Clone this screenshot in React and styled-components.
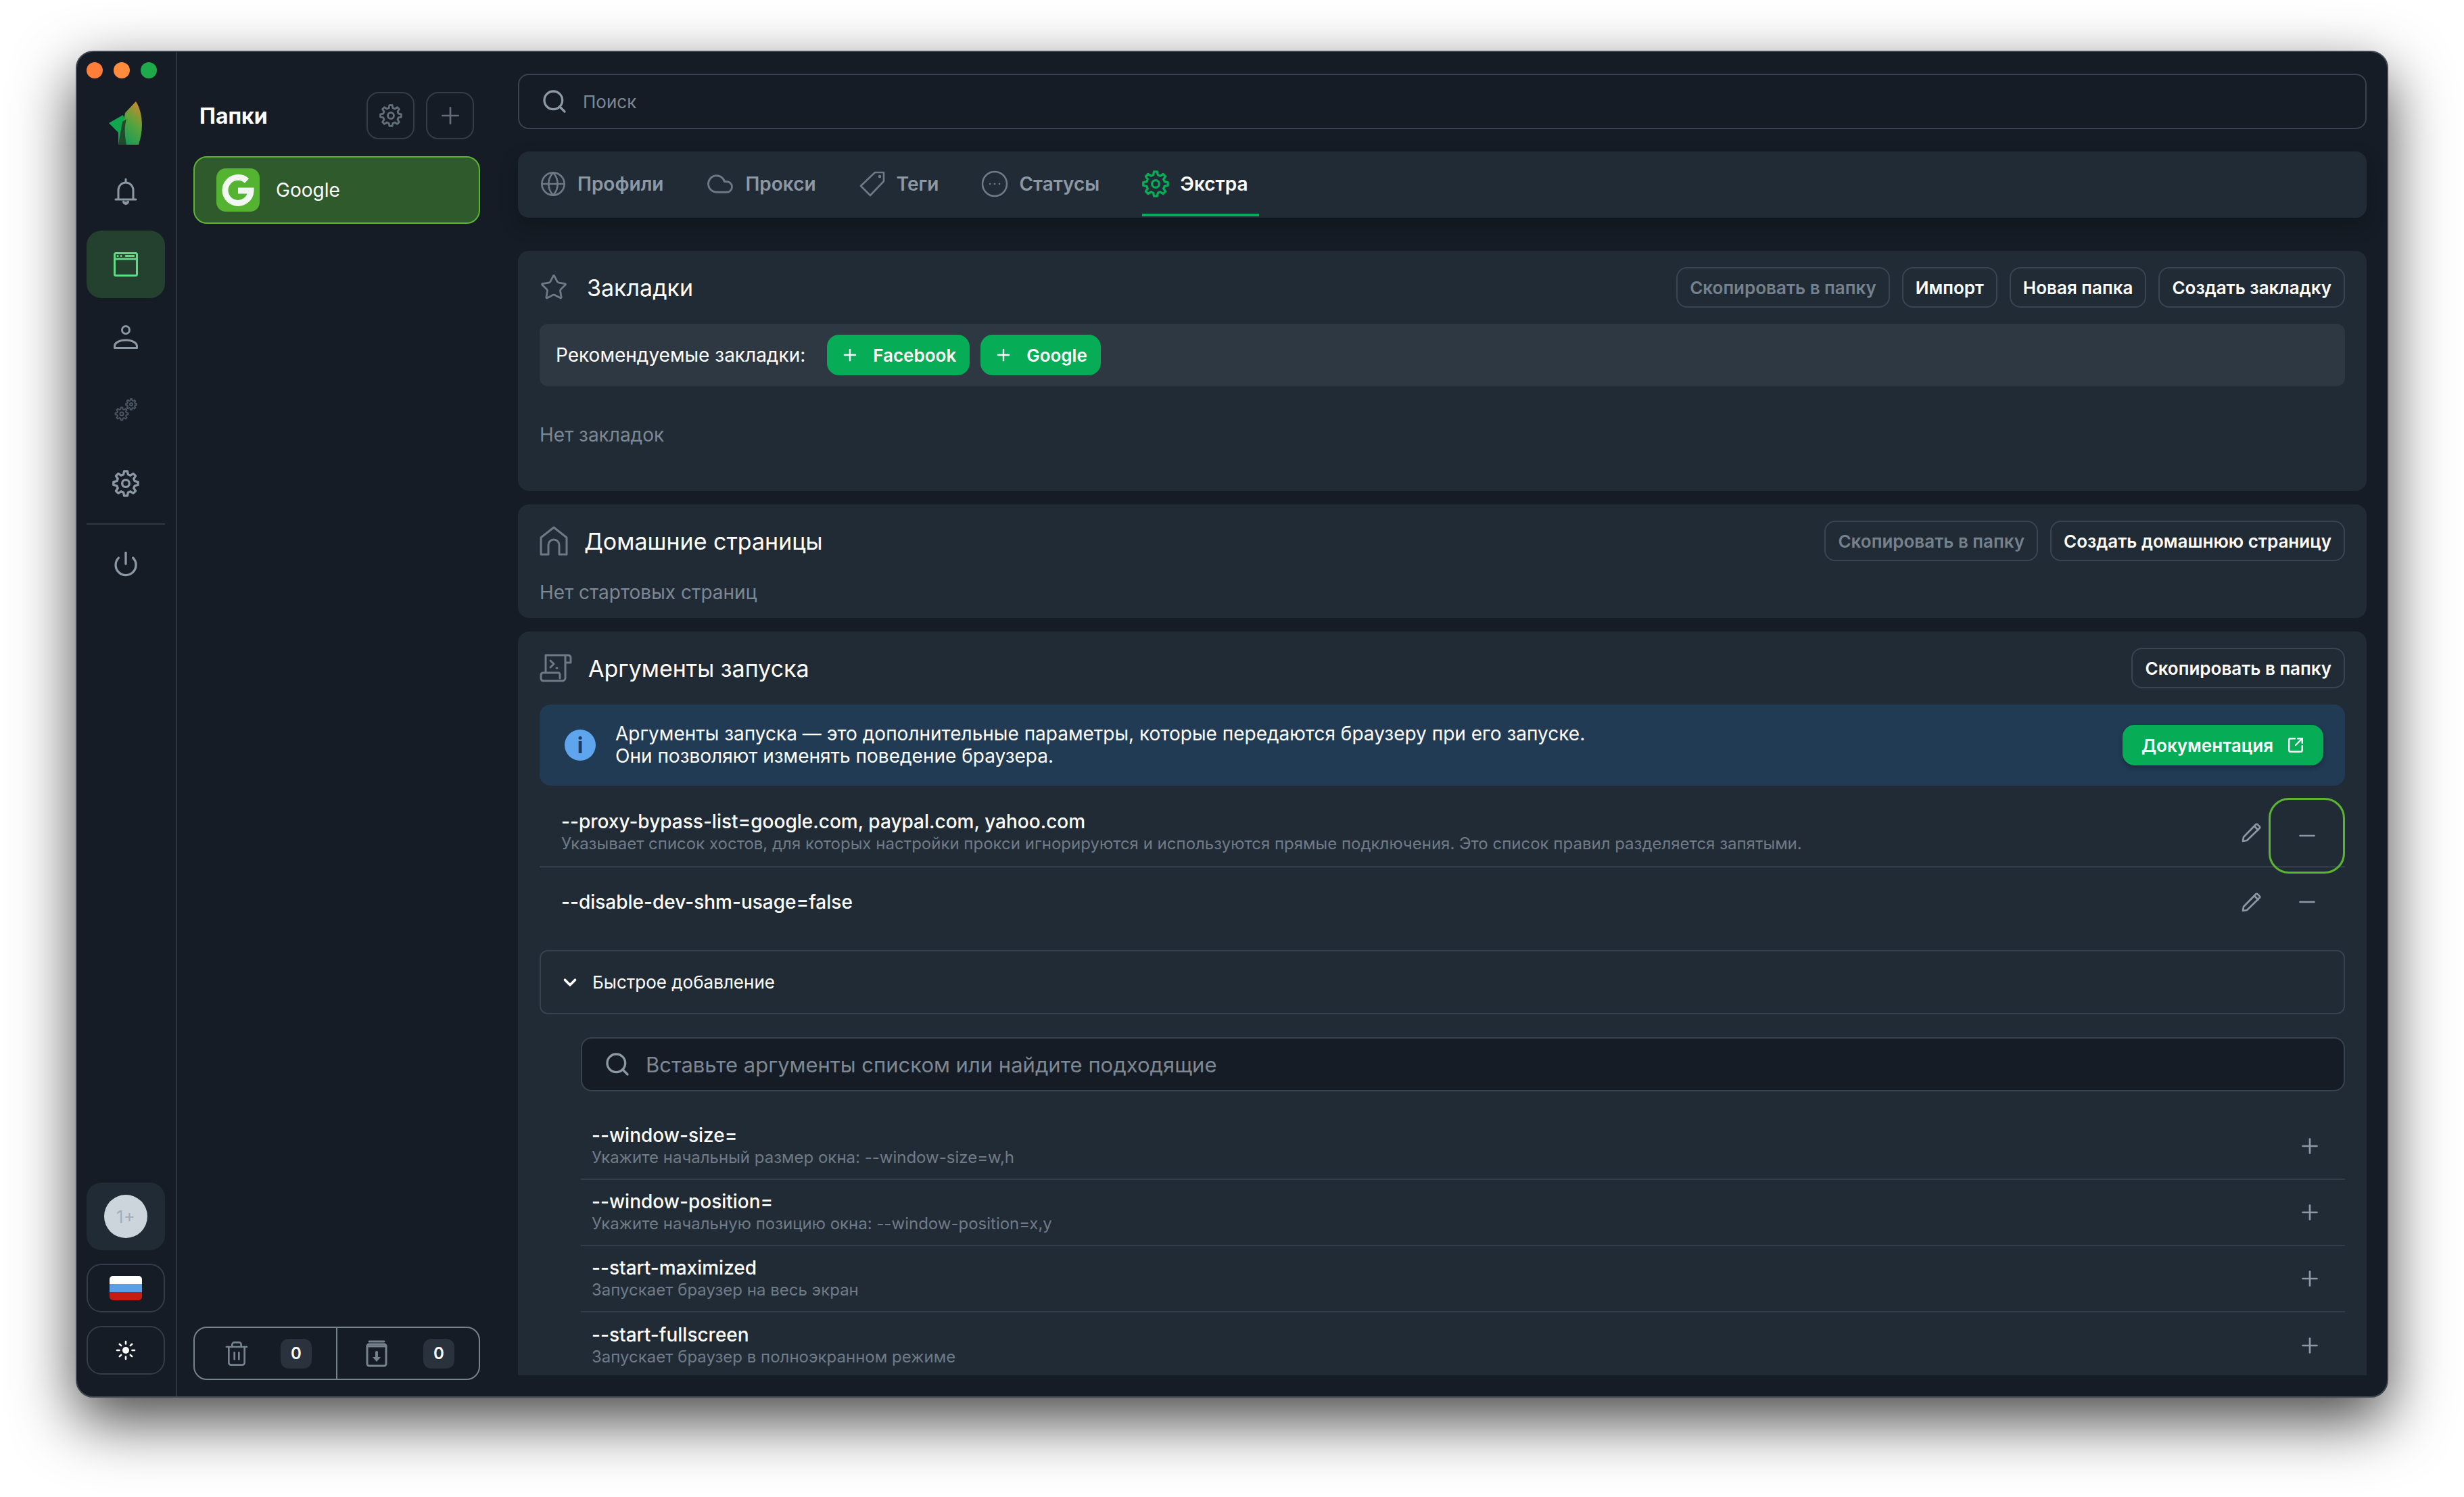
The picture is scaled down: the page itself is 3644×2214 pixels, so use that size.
import React from "react";
import styled, { createGlobalStyle } from "styled-components";
import { Search, Plus, Minus, Globe, Cloud, Power, ChevronDown, Trash2, SquareArrowOutUpRight, Star } from "lucide-react";

const FONT = "Inter, 'Noto Sans', 'Liberation Sans', sans-serif";

const GlobalStyle = createGlobalStyle`
  html, body { margin: 0; padding: 0; background: #fff; }
  * { box-sizing: border-box; }
  body { font-family: ${FONT}; }
`;

// --- SHELL ---
const Page = styled.div`
  width: 3644px;
  height: 2214px;
  padding: 75px 112px 147px;
  background: #fff;
  overflow: hidden;
`;

const Window = styled.div`
  width: 3420px;
  height: 1992px;
  display: flex;
  background: #151c25;
  border: 2px solid #3d454f;
  border-radius: 26px;
  box-shadow: 0 34px 90px rgba(0, 0, 0, 0.72);
  overflow: hidden;
`;

// --- RAIL ---
const Rail = styled.aside`
  width: 148px;
  flex-shrink: 0;
  display: flex;
  flex-direction: column;
  padding: 15px 16px 32px 14px;
  border-right: 2px solid #2c3540;
`;

const Lights = styled.div`
  display: flex;
  gap: 16px;
  height: 24px;
`;

const Light = styled.span`
  width: 24px;
  height: 24px;
  border-radius: 50%;
  background: ${(p) => p.$color};
`;

const LogoBox = styled.div`
  display: flex;
  justify-content: center;
  margin: 34px 0 19px;
  height: 64px;
`;

const RailItem = styled.div`
  height: 100px;
  margin-bottom: 8px;
  display: flex;
  align-items: center;
  justify-content: center;
  border-radius: 22px;
  background: ${(p) => (p.$active ? "#24402f" : "transparent")};
`;

const RailDivider = styled.div`
  height: 2px;
  margin: 1px 0 8px;
  background: #2f3842;
`;

const RailBottom = styled.div`
  margin-top: auto;
  display: flex;
  flex-direction: column;
  gap: 20px;
`;

const AvatarCell = styled.div`
  height: 100px;
  display: flex;
  align-items: center;
  justify-content: center;
  border-radius: 22px;
  background: #212b36;
`;

const Avatar = styled.div`
  width: 64px;
  height: 64px;
  border-radius: 50%;
  display: flex;
  align-items: center;
  justify-content: center;
  background: #cbd5db;
  color: #a3afb8;
  font-size: 26px;
`;

const RailButton = styled.div`
  height: 72px;
  display: flex;
  align-items: center;
  justify-content: center;
  border: 2px solid #333d49;
  border-radius: 22px;
`;

const Flag = styled.div`
  width: 48px;
  height: 36px;
  border-radius: 5px;
  overflow: hidden;
  display: flex;
  flex-direction: column;
`;

const FlagStripe = styled.span`
  flex: 1;
  background: ${(p) => p.$color};
`;

// --- FOLDERS ---
const Folders = styled.aside`
  width: 504px;
  flex-shrink: 0;
  display: flex;
  flex-direction: column;
  padding: 59px 56px 24px 24px;
`;

const FoldersHead = styled.div`
  display: flex;
  align-items: center;
  justify-content: space-between;
  height: 70px;
  padding: 0 9px;
`;

const FoldersTitle = styled.h2`
  margin: 0;
  color: #fff;
  font-size: 32px;
  font-weight: 700;
`;

const HeadButtons = styled.div`
  display: flex;
  gap: 17px;
`;

const SquareButton = styled.div`
  width: 71px;
  height: 70px;
  display: flex;
  align-items: center;
  justify-content: center;
  border: 2px solid #333d49;
  border-radius: 18px;
`;

const FolderItem = styled.div`
  margin-top: 25px;
  height: 100px;
  display: flex;
  align-items: center;
  gap: 24px;
  padding-left: 32px;
  background: #2f5a2c;
  border: 2px solid #5cb531;
  border-radius: 20px;
  color: #fff;
  font-size: 28px;
`;

const FolderIcon = styled.div`
  width: 64px;
  height: 64px;
  border-radius: 14px;
  background: #55b332;
  display: flex;
  align-items: center;
  justify-content: center;
`;

const FoldersFoot = styled.div`
  margin-top: auto;
  height: 79px;
  display: flex;
  border: 2px solid #76838f;
  border-radius: 20px;
`;

const FootCell = styled.div`
  flex: 1;
  display: flex;
  align-items: center;
  justify-content: space-between;
  padding: 0 36px 0 42px;
  & + & { border-left: 2px solid #76838f; }
`;

const CountBadge = styled.span`
  width: 46px;
  height: 44px;
  border-radius: 12px;
  background: #29323d;
  color: #fff;
  font-size: 24px;
  font-weight: 600;
  display: flex;
  align-items: center;
  justify-content: center;
`;

// --- MAIN ---
const Main = styled.main`
  flex: 1;
  min-width: 0;
  display: flex;
  flex-direction: column;
  padding: 32px 30px 31px 0;
`;

const SearchBox = styled.div`
  height: ${(p) => p.$height}px;
  flex-shrink: 0;
  display: flex;
  align-items: center;
  gap: ${(p) => p.$gap}px;
  padding-left: 32px;
  margin-left: ${(p) => p.$indent || 0}px;
  margin-top: ${(p) => p.$top || 0}px;
  background: #151c25;
  border: 2px solid #39434f;
  border-radius: 16px;
  color: #7c8894;
  font-size: ${(p) => p.$font}px;
`;

const Tabs = styled.nav`
  margin-top: 33px;
  height: 98px;
  flex-shrink: 0;
  display: flex;
  gap: 46px;
  padding: 0 32px 2px;
  background: #212b36;
  border-radius: 16px;
  box-shadow: 0 12px 24px rgba(10, 14, 20, 0.35);
`;

const Tab = styled.div`
  display: flex;
  align-items: center;
  gap: 16px;
  padding-right: 17px;
  padding-top: 4px;
  border-bottom: 4px solid ${(p) => (p.$active ? "#06ac56" : "transparent")};
  color: ${(p) => (p.$active ? "#fff" : "#8c98a4")};
  font-size: 28px;
  font-weight: 600;
`;

const Scroll = styled.div`
  flex: 1;
  min-height: 0;
  margin-top: 49px;
  display: flex;
  flex-direction: column;
  gap: 20px;
  overflow: hidden;
`;

const Section = styled.section`
  flex-shrink: 0;
  padding: 24px 32px 22px;
  background: #212b36;
  border-radius: 16px;
`;

const SectionHead = styled.header`
  min-height: 60px;
  display: flex;
  align-items: center;
  gap: ${(p) => p.$gap || 28}px;
`;

const SectionTitle = styled.h3`
  margin: 0;
  color: #fff;
  font-size: 34px;
  font-weight: 400;
`;

const HeadActions = styled.div`
  margin-left: auto;
  display: flex;
  gap: 18px;
`;

const OutlineButton = styled.div`
  height: 60px;
  display: flex;
  align-items: center;
  padding: 0 18px;
  border: 2px solid #3b4551;
  border-radius: 16px;
  color: ${(p) => (p.$muted ? "#75818d" : "#fff")};
  font-size: 26px;
  font-weight: 600;
  white-space: nowrap;
`;

const RecommendBar = styled.div`
  margin-top: 24px;
  height: 92px;
  display: flex;
  align-items: center;
  padding-left: 24px;
  background: #2e3843;
  border-radius: 12px;
  color: #fff;
  font-size: 28px;
`;

const RecommendLabel = styled.span`
  margin-right: 32px;
`;

const GreenButton = styled.div`
  height: 60px;
  display: flex;
  align-items: center;
  gap: ${(p) => p.$gap}px;
  padding: 0 ${(p) => p.$pad}px;
  margin-right: ${(p) => p.$after || 0}px;
  flex-shrink: 0;
  background: #06ac56;
  border-radius: 18px;
  color: #fff;
  font-size: 26px;
  font-weight: 600;
  box-shadow: ${(p) => (p.$raised ? "0 4px 6px rgba(10, 20, 30, 0.35)" : "none")};
`;

const EmptyText = styled.div`
  margin: ${(p) => p.$top}px 0 ${(p) => p.$bottom}px;
  color: #7c8894;
  font-size: 28px;
  line-height: 32px;
`;

const InfoBox = styled.div`
  margin-top: 24px;
  height: 120px;
  display: flex;
  align-items: center;
  gap: 29px;
  padding: 0 32px 0 37px;
  background: #213b55;
  border-radius: 16px;
  color: #fff;
  font-size: 28px;
  line-height: 33px;
`;

const InfoBadge = styled.div`
  width: 46px;
  height: 46px;
  flex-shrink: 0;
  border-radius: 50%;
  background: #5fa5ee;
  color: #213b55;
  display: flex;
  align-items: center;
  justify-content: center;
  font-size: 32px;
  font-weight: 700;
`;

const InfoText = styled.div`
  flex: 1;
`;

const ArgRow = styled.div`
  height: 102px;
  margin-top: ${(p) => p.$top || 0}px;
  display: flex;
  align-items: center;
  padding-left: 32px;
  border-bottom: ${(p) => (p.$divided ? "2px solid #333d49" : "none")};
`;

const ArgText = styled.div`
  flex: 1;
  min-width: 0;
`;

const ArgName = styled.div`
  color: #fff;
  font-size: 28px;
  font-weight: 500;
  line-height: 32px;
`;

const ArgDesc = styled.div`
  margin-top: 1px;
  color: #6f7b87;
  font-size: 24px;
  line-height: 32px;
`;

const RowEdit = styled.div`
  margin-right: 10px;
  display: flex;
`;

const RemoveButton = styled.div`
  width: 113px;
  height: ${(p) => (p.$focused ? 112 : 100)}px;
  margin-top: ${(p) => (p.$focused ? 10 : 0)}px;
  flex-shrink: 0;
  display: flex;
  align-items: center;
  justify-content: center;
  border: 3px solid ${(p) => (p.$focused ? "#5cb531" : "transparent")};
  border-radius: 30px;
`;

const Collapse = styled.div`
  margin-top: 20px;
  height: 95px;
  display: flex;
  align-items: center;
  gap: 18px;
  padding-left: 28px;
  border: 2px solid #38424e;
  border-radius: 12px;
  color: #fff;
  font-size: 26px;
`;

const QuickList = styled.div`
  margin: 33px 0 0 61px;
`;

const QuickRow = styled.div`
  height: 98px;
  display: flex;
  align-items: center;
  justify-content: space-between;
  padding: 0 34px 0 16px;
  border-bottom: 2px solid #333d49;
  &:last-child { border-bottom: none; }
`;

// --- ICONS ---
const Glyph = styled.svg`
  display: block;
  flex-shrink: 0;
  fill: none;
  stroke: ${(p) => p.$color};
  stroke-linecap: round;
  stroke-linejoin: round;
`;

const gearPath = (cx, cy, outer, inner, teeth = 8) => {
  const pts = [];
  const step = (Math.PI * 2) / teeth;
  for (let i = 0; i < teeth; i++) {
    const a = i * step - Math.PI / 2;
    [
      [a - step * 0.17, outer],
      [a + step * 0.17, outer],
      [a + step * 0.32, inner],
      [a + step * 0.68, inner],
    ].forEach(([ang, r]) => {
      pts.push(`${(cx + r * Math.cos(ang)).toFixed(2)} ${(cy + r * Math.sin(ang)).toFixed(2)}`);
    });
  }
  return `M${pts.join("L")}Z`;
};

const Gear = ({ size = 40, color, width = 2 }) => (
  <Glyph as="svg" $color={color} width={size} height={size} viewBox="0 0 24 24" strokeWidth={width}>
    <path d={gearPath(12, 12, 11, 8.2)} />
    <circle cx="12" cy="12" r="3.2" />
  </Glyph>
);

const Gears = () => (
  <Glyph $color="#4a5561" width="36" height="36" viewBox="0 0 36 36" strokeWidth="2">
    <path d={gearPath(12, 23, 9.5, 7)} />
    <circle cx="12" cy="23" r="2.6" />
    <path d={gearPath(26, 9, 8, 5.8)} />
    <circle cx="26" cy="9" r="2" />
  </Glyph>
);

const Logo = () => (
  <svg width="50" height="64" viewBox="0 0 50 64">
    <defs>
      <linearGradient id="leafRight" x1="0.7" y1="0" x2="0.2" y2="1">
        <stop offset="0" stopColor="#c28a2e" />
        <stop offset="0.45" stopColor="#55a43c" />
        <stop offset="1" stopColor="#0f9a5c" />
      </linearGradient>
    </defs>
    <path d="M0 32 L21 20 L28 44 L14 64 L14 46 Z" fill="#0fa64d" />
    <path d="M14 64 L20 40 L24 17 L40 0 C50 16 52 40 44 64 Z" fill="url(#leafRight)" />
    <path d="M14 64 L20 30 L26 26 C22 40 24 52 26 64 Z" fill="#1f4a2c" />
  </svg>
);

const Bell = () => (
  <Glyph $color="#8c98a4" width="34" height="40" viewBox="0 0 34 40" strokeWidth="3">
    <path d="M2 32h30M6 32V18c0-6 5-11 11-11s11 5 11 11v14" />
    <path d="M17 2v4" />
    <path d="M13.5 35a3.5 3.5 0 0 0 7 0" fill="#8c98a4" />
  </Glyph>
);

const BrowserIcon = () => (
  <Glyph $color="#5fdc83" width="36" height="36" viewBox="0 0 36 36" strokeWidth="3">
    <rect x="1.5" y="1.5" width="33" height="33" rx="2" />
    <path d="M2 10h32" />
    <path d="M6 5.6h.2M11 5.6h.2M18 5.6h12" />
  </Glyph>
);

const UserIcon = () => (
  <Glyph $color="#8c98a4" width="36" height="36" viewBox="0 0 36 36" strokeWidth="3">
    <circle cx="18" cy="7" r="5.5" />
    <path d="M1.5 33.5V31c0-5 7-9 16.500-9s16.500 4 16.500 9v2.500z" />
  </Glyph>
);

const Sun = () => (
  <Glyph $color="#fff" width="30" height="30" viewBox="0 0 30 30" strokeWidth="2.600">
    <circle cx="15" cy="15" r="5" fill="#fff" stroke="none" />
    <path d="M15 2v3.500M15 24.500V28M2 15h3.500M24.500 15H28M5.800 5.800l2.400 2.400M21.800 21.800l2.400 2.400M5.800 24.200l2.400-2.400M21.800 8.200l2.400-2.400" />
  </Glyph>
);

const Archive = () => (
  <Glyph $color="#76838f" width="32" height="40" viewBox="0 0 32 40" strokeWidth="3">
    <rect x="2" y="6" width="28" height="32" rx="3" />
    <path d="M5 2h22M2 9h28" />
    <path d="M16 18v8" strokeWidth="4" />
    <path d="M10 25h12l-6 7z" fill="#76838f" stroke="none" />
  </Glyph>
);

const TagIcon = () => (
  <Glyph $color="#6d7984" width="40" height="40" viewBox="0 0 40 40" strokeWidth="2.600">
    <path d="M24 3h13v13L17 37 3 23z" />
    <circle cx="31" cy="9" r="1" />
  </Glyph>
);

const EllipsisCircle = () => (
  <Glyph $color="#6d7984" width="40" height="40" viewBox="0 0 40 40" strokeWidth="2.600">
    <circle cx="20" cy="20" r="18" />
    <path d="M13 20h.1M20 20h.1M27 20h.1" />
  </Glyph>
);

const HouseIcon = () => (
  <Glyph $color="#6d7984" width="42" height="44" viewBox="0 0 42 44" strokeWidth="3">
    <path d="M2 42V17L21 2l19 15v25H29V28a8 8 0 0 0-16 0v14z" />
  </Glyph>
);

const ScriptIcon = () => (
  <Glyph $color="#6d7984" width="48" height="42" viewBox="0 0 48 42" strokeWidth="3">
    <path d="M9 28V2h33c3 0 4 2 4 4v7H38M38 2v34c0 2-2 4-4 4H6c-3 0-4-2-4-4v-4c0-2 1-4 3-4h23c2 0 2 2 2 4v4" />
    <path d="M16 10l5 5-5 5M25 21h1" />
  </Glyph>
);

const Pencil = () => (
  <Glyph $color="#8c98a4" width="30" height="30" viewBox="0 0 30 30" strokeWidth="2.600">
    <path d="M2 28l1-6L21 3.500a2 2 0 0 1 2.800 0l2.700 2.700a2 2 0 0 1 0 2.800L8 27z" />
    <path d="M19 6l5.500 5.500" />
  </Glyph>
);

const GoogleMark = () => (
  <svg width="50" height="50" viewBox="0 0 50 50" fill="none">
    <path d="M38 11.500A19 19 0 1 0 44 26H25" stroke="#f2f7f2" strokeWidth="9" />
  </svg>
);

const SearchIcon = () => <Search size={40} color="#8c98a4" strokeWidth={2} />;

const railIcons = [
  { key: "bell", node: <Bell /> },
  { key: "browser", node: <BrowserIcon />, active: true },
  { key: "user", node: <UserIcon /> },
  { key: "gears", node: <Gears /> },
  { key: "settings", node: <Gear size={40} color="#8c98a4" /> },
];

const quickArgs = [
  ["--window-size=", "Укажите начальный размер окна: --window-size=w,h"],
  ["--window-position=", "Укажите начальную позицию окна: --window-position=x,y"],
  ["--start-maximized", "Запускает браузер на весь экран"],
  ["--start-fullscreen", "Запускает браузер в полноэкранном режиме"],
];

const App = () => {
  return (
    <Page>
      <GlobalStyle />
      <Window>
        <Rail>
          <Lights>
            <Light $color="#ff7f3a" />
            <Light $color="#ff8b3d" />
            <Light $color="#1eaa4a" />
          </Lights>
          <LogoBox>
            <Logo />
          </LogoBox>
          {railIcons.map((item) => (
            <RailItem key={item.key} $active={item.active}>
              {item.node}
            </RailItem>
          ))}
          <RailDivider />
          <RailItem>
            <Power size={40} color="#8c98a4" strokeWidth={2} />
          </RailItem>
          <RailBottom>
            <AvatarCell>
              <Avatar>1+</Avatar>
            </AvatarCell>
            <RailButton>
              <Flag>
                <FlagStripe $color="#fff" />
                <FlagStripe $color="#5a9fe3" />
                <FlagStripe $color="#c51c14" />
              </Flag>
            </RailButton>
            <RailButton>
              <Sun />
            </RailButton>
          </RailBottom>
        </Rail>

        <Folders>
          <FoldersHead>
            <FoldersTitle>Папки</FoldersTitle>
            <HeadButtons>
              <SquareButton>
                <Gear size={34} color="#626e7a" />
              </SquareButton>
              <SquareButton>
                <Plus size={40} color="#626e7a" strokeWidth={1.6} />
              </SquareButton>
            </HeadButtons>
          </FoldersHead>
          <FolderItem>
            <FolderIcon>
              <GoogleMark />
            </FolderIcon>
            Google
          </FolderItem>
          <FoldersFoot>
            <FootCell>
              <Trash2 size={40} color="#76838f" strokeWidth={1.6} />
              <CountBadge>0</CountBadge>
            </FootCell>
            <FootCell>
              <Archive />
              <CountBadge>0</CountBadge>
            </FootCell>
          </FoldersFoot>
        </Folders>

        <Main>
          <SearchBox $height={82} $gap={22} $font={26}>
            <SearchIcon />
            Поиск
          </SearchBox>
          <Tabs>
            <Tab>
              <Globe size={40} color="#6d7984" strokeWidth={1.6} />
              Профили
            </Tab>
            <Tab>
              <Cloud size={42} color="#6d7984" strokeWidth={1.6} />
              Прокси
            </Tab>
            <Tab>
              <TagIcon />
              Теги
            </Tab>
            <Tab>
              <EllipsisCircle />
              Статусы
            </Tab>
            <Tab $active>
              <Gear size={40} color="#06ac56" />
              Экстра
            </Tab>
          </Tabs>

          <Scroll>
            <Section>
              <SectionHead>
                <Star size={42} color="#6d7984" strokeWidth={1.6} />
                <SectionTitle>Закладки</SectionTitle>
                <HeadActions>
                  <OutlineButton $muted>Скопировать в папку</OutlineButton>
                  <OutlineButton>Импорт</OutlineButton>
                  <OutlineButton>Новая папка</OutlineButton>
                  <OutlineButton>Создать закладку</OutlineButton>
                </HeadActions>
              </SectionHead>
              <RecommendBar>
                <RecommendLabel>Рекомендуемые закладки:</RecommendLabel>
                <GreenButton $gap={20} $pad={20} $after={16}>
                  <Plus size={28} color="#fff" strokeWidth={2} />
                  Facebook
                </GreenButton>
                <GreenButton $gap={20} $pad={20}>
                  <Plus size={28} color="#fff" strokeWidth={2} />
                  Google
                </GreenButton>
              </RecommendBar>
              <EmptyText $top={56} $bottom={45}>Нет закладок</EmptyText>
            </Section>

            <Section>
              <SectionHead $gap={24}>
                <HouseIcon />
                <SectionTitle>Домашние страницы</SectionTitle>
                <HeadActions>
                  <OutlineButton $muted>Скопировать в папку</OutlineButton>
                  <OutlineButton>Создать домашнюю страницу</OutlineButton>
                </HeadActions>
              </SectionHead>
              <EmptyText $top={30} $bottom={0}>Нет стартовых страниц</EmptyText>
            </Section>

            <Section>
              <SectionHead $gap={24}>
                <ScriptIcon />
                <SectionTitle>Аргументы запуска</SectionTitle>
                <HeadActions>
                  <OutlineButton>Скопировать в папку</OutlineButton>
                </HeadActions>
              </SectionHead>
              <InfoBox>
                <InfoBadge>i</InfoBadge>
                <InfoText>
                  Аргументы запуска — это дополнительные параметры, которые передаются браузеру при его запуске.
                  <br />
                  Они позволяют изменять поведение браузера.
                </InfoText>
                <GreenButton $gap={20} $pad={28} $raised>
                  Документация
                  <SquareArrowOutUpRight size={26} color="#fff" strokeWidth={2.2} />
                </GreenButton>
              </InfoBox>
              <ArgRow $top={19} $divided>
                <ArgText>
                  <ArgName>--proxy-bypass-list=google.com, paypal.com, yahoo.com</ArgName>
                  <ArgDesc>
                    Указывает список хостов, для которых настройки прокси игнорируются и используются прямые подключения. Это список правил разделяется запятыми.
                  </ArgDesc>
                </ArgText>
                <RowEdit>
                  <Pencil />
                </RowEdit>
                <RemoveButton $focused>
                  <Minus size={36} color="#8c98a4" strokeWidth={1.8} />
                </RemoveButton>
              </ArgRow>
              <ArgRow>
                <ArgText>
                  <ArgName>--disable-dev-shm-usage=false</ArgName>
                </ArgText>
                <RowEdit>
                  <Pencil />
                </RowEdit>
                <RemoveButton>
                  <Minus size={36} color="#8c98a4" strokeWidth={1.8} />
                </RemoveButton>
              </ArgRow>
              <Collapse>
                <ChevronDown size={30} color="#fff" strokeWidth={3} />
                Быстрое добавление
              </Collapse>
              <SearchBox $height={80} $gap={22} $font={31} $indent={61} $top={34}>
                <SearchIcon />
                Вставьте аргументы списком или найдите подходящие
              </SearchBox>
              <QuickList>
                {quickArgs.map(([name, desc]) => (
                  <QuickRow key={name}>
                    <ArgText>
                      <ArgName>{name}</ArgName>
                      <ArgDesc>{desc}</ArgDesc>
                    </ArgText>
                    <Plus size={36} color="#8c98a4" strokeWidth={1.8} />
                  </QuickRow>
                ))}
              </QuickList>
            </Section>
          </Scroll>
        </Main>
      </Window>
    </Page>
  );
};

export default App;
